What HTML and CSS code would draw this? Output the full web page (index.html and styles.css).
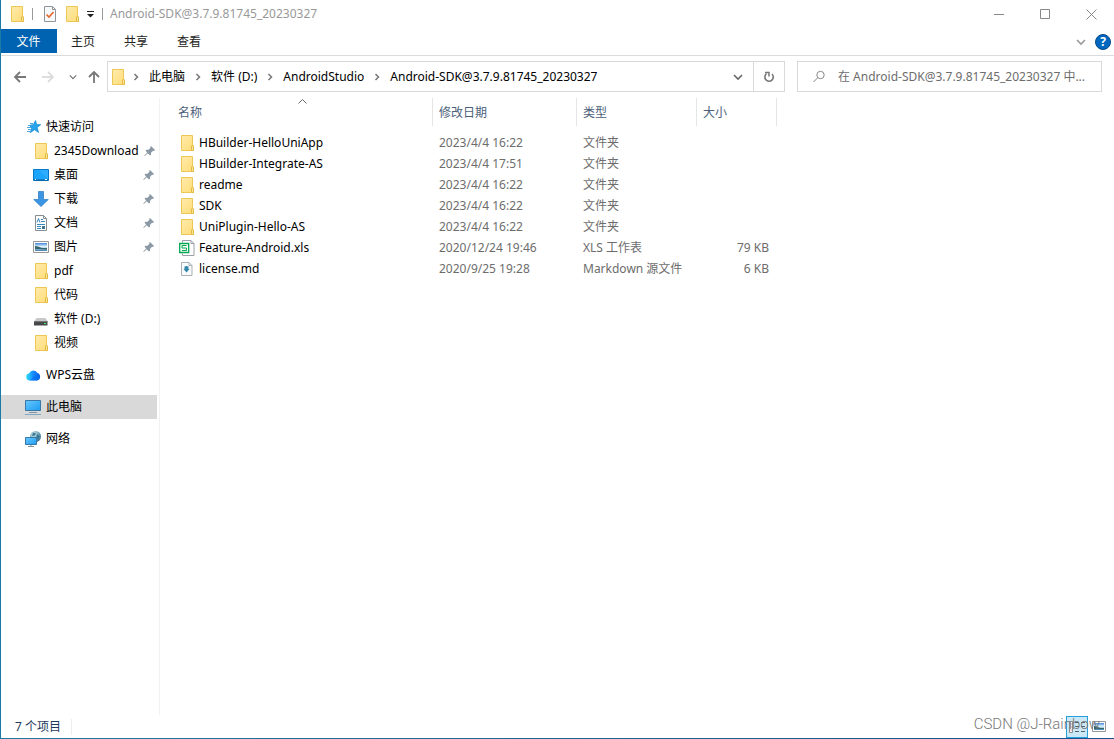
FILE: index.html
```html
<!DOCTYPE html>
<html lang="zh-CN">
<head>
<meta charset="utf-8">
<title>Android-SDK@3.7.9.81745_20230327</title>
<link rel="stylesheet" href="styles.css">
</head>
<body>
<svg class="sprite" aria-hidden="true">
  <defs>
    <linearGradient id="gold" x1="0" y1="0" x2="1" y2="1"><stop offset="0" stop-color="#ffebac"/><stop offset="1" stop-color="#ffdc77"/></linearGradient>
    <linearGradient id="screen" x1="0" y1="0" x2="1" y2="1"><stop offset="0" stop-color="#69c8ff"/><stop offset="1" stop-color="#1c9cf2"/></linearGradient>
    <linearGradient id="cloud" x1="0" y1="0" x2="1" y2="0"><stop offset="0" stop-color="#2fdcf5"/><stop offset=".5" stop-color="#168cff"/><stop offset="1" stop-color="#075bdf"/></linearGradient>
    <linearGradient id="sky" x1="0" y1="0" x2="0" y2="1"><stop offset="0" stop-color="#3f83dc"/><stop offset=".45" stop-color="#e2f5fc"/><stop offset=".6" stop-color="#b8d8e8"/><stop offset="1" stop-color="#3f7cae"/></linearGradient>
    <radialGradient id="globe" cx=".35" cy=".3" r=".8"><stop offset="0" stop-color="#dbf1f5"/><stop offset=".5" stop-color="#7ba9bb"/><stop offset="1" stop-color="#2d6788"/></radialGradient>
  </defs>
  <symbol id="folder" viewBox="0 0 16 16"><path d="M2.500.5h11v10l1 1v4h-12z" fill="url(#gold)" stroke="#edc755"/><path d="M12.500 15.500v-4.500l1-1 1 1v4.500z" fill="#ffe394" stroke="#e4bb45"/></symbol>
  <symbol id="pin" viewBox="0 0 12 12"><path d="M7 1l4 4-1 1-1-.3-2 2v2L6 10.500 3.800 8.200.8 11l-.5-.5L3.200 7.500 1.500 5.500 2.500 4.700h2l2-2L6.200 2z" fill="#8998a4"/></symbol>
  <symbol id="sep" viewBox="0 0 8 8"><path d="M2.500 1l3 3-3 3" fill="none" stroke="#777" stroke-width="1.500"/></symbol>
  <symbol id="down" viewBox="0 0 10 10"><path d="M1 3l4 4 4-4" fill="none" stroke="currentColor" stroke-width="1.600"/></symbol>
  <symbol id="arrow" viewBox="0 0 14 14"><path d="M13 7H2M7 2L2 7l5 5" fill="none" stroke="currentColor" stroke-width="1.800"/></symbol>
  <symbol id="star" viewBox="0 0 16 16"><path d="M10.500 1.500l1.200 4 4 .2-3.500 2.700 1.300 5-4-2.700-4.200 3 1.300-4.500-2-3 3.700-.5z" fill="#27a4ed" stroke="#1487cf" stroke-width=".7"/><path d="M5 4.500h3M3 6.500h3M2 8.500h4M3 10.500h3M2 12.500h3" stroke="#4ca9df"/></symbol>
  <symbol id="desktop" viewBox="0 0 16 16"><path d="M.5 2.500h15v11H.5z" fill="#1ca5ff" stroke="#0878c8"/><path d="M1 13h14" stroke="#075895"/><path d="M2 12.500h1m9 0h2" stroke="#fff"/><path d="M6 3h9v9z" fill="#40b5ff" opacity=".5"/></symbol>
  <symbol id="download" viewBox="0 0 16 16"><path d="M5.500.5h5v8h4.800L8 15.500.7 8.500h4.800z" fill="#3a96e5" stroke="#2879bc" stroke-width=".7"/></symbol>
  <symbol id="doc" viewBox="0 0 16 16"><path d="M2.500.5h8l3 3v12h-11z" fill="#fff" stroke="#858e94"/><path d="M10.500.5v3h3" fill="none" stroke="#858e94"/><path d="M4 7.500l1.500-4 1.500 4M8 4.500h2M8 6.500h4M4 9.500h8M4 11.500h4M4 13.500h4" fill="none" stroke="#3788bc"/><path d="M9 11h3v3H9z" fill="#42758d"/></symbol>
  <symbol id="picture" viewBox="0 0 16 16"><path d="M.5 2.500h15v11H.5z" fill="#fff" stroke="#979797"/><path d="M2 4h12v8H2z" fill="url(#sky)"/><path d="M2 7l3 .5 4 1.500h5v1.500l-6-.5H2z" fill="#386568"/></symbol>
  <symbol id="thumb" viewBox="0 0 14 11"><path d="M.5.5h13v10H.5z" fill="#fff" stroke="#979797"/><path d="M2 2h10v7H2z" fill="url(#sky)"/><path d="M2 5l3 .5 3 1.500h4v1H2z" fill="#386568"/></symbol>
  <symbol id="drive" viewBox="0 0 16 16"><path d="M3.500 7h9l2 3h-13z" fill="#c6c8ca"/><path d="M1 10h13.500v4.500H1z" fill="#45494c"/><path d="M1 10.500h13.500" stroke="#777"/><path d="M11 12h2v1h-2z" fill="#41f35b"/></symbol>
  <symbol id="cloudicon" viewBox="0 0 16 16"><path d="M4.500 13.500a3.700 3.700 0 0 1-.3-7.300A4.600 4.600 0 0 1 12.500 6a3.900 3.900 0 0 1-.5 7.500z" fill="url(#cloud)"/><path d="M4 13.500c3 0 3-5 7-5 2 0 3 .5 4 1.500a3.500 3.500 0 0 1-3 3.500z" fill="#0870ee" opacity=".6"/></symbol>
  <symbol id="pc" viewBox="0 0 16 16"><path d="M.5 1.500h15v10H.5z" fill="url(#screen)" stroke="#3977a6"/><path d="M4 13.500h8" stroke="#8197a7"/><path d="M0 15.500h16" stroke="#81a9c6"/></symbol>
  <symbol id="network" viewBox="0 0 16 16"><circle cx="10.500" cy="5.500" r="5.500" fill="url(#globe)"/><path d="M8 1.500l3 1-1 2-3 .5M12 3l3 2-2 4-2-2z" fill="#3b7895"/><path d="M.5 6.500h11v7H.5z" fill="url(#screen)" stroke="#3977a6"/><path d="M3 15.500h6M6 14v1" stroke="#8197a7"/></symbol>
  <symbol id="xls" viewBox="0 0 16 16"><path d="M3.500 2.500v-2h8.500l3 3v12H3.500v-2" fill="#fff" stroke="#9b9fa9"/><path d="M12 .5v3h3" fill="none" stroke="#9b9fa9"/><path d="M.7 3.500h9v9h-9z" fill="#fff" stroke="#00a94f" stroke-width="1.300"/><path d="M7.500 5.500H3v2.500h4.500v2.500H3" fill="none" stroke="#00a94f"/></symbol>
  <symbol id="md" viewBox="0 0 16 16"><path d="M2.500 1.500h7.500l3 3v10H2.500z" fill="#f8fafb" stroke="#aab1b7"/><path d="M10 1.500v3h3" fill="none" stroke="#aab1b7"/><path d="M5.500 5.500h1V5h2v.5h1V8h1L7.500 11.500 4.500 8h1z" fill="#3387aa"/></symbol>
  <symbol id="check" viewBox="0 0 16 16"><path d="M2.500.5h8l3 3v12h-11z" fill="#f7f9fb" stroke="#8f959b"/><path d="M10.500.5v3h3" fill="none" stroke="#8f959b"/><path d="M4.500 8.500l2.500 2.500 4.500-5" fill="none" stroke="#e8652a" stroke-width="1.600"/></symbol>
</svg>

<div class="window">
  <header class="titlebar">
    <div class="quick">
      <svg class="icon"><use href="#folder"/></svg>
      <span class="bar"></span>
      <button class="plain" aria-label="属性"><svg class="icon"><use href="#check"/></svg></button>
      <button class="plain" aria-label="新建文件夹"><svg class="icon"><use href="#folder"/></svg></button>
      <button class="plain more" aria-label="自定义快速访问工具栏"><svg width="8" height="8" viewBox="0 0 8 8"><path d="M0 1.500h7" stroke="#222"/><path d="M0 4h7L3.500 7.500z" fill="#222"/></svg></button>
      <span class="bar"></span>
    </div>
    <h1 class="title">Android-SDK@3.7.9.81745_20230327</h1>
    <div class="caption">
      <button class="plain" aria-label="最小化"><svg width="11" height="11" viewBox="0 0 11 11"><path d="M0 5.500h10" stroke="#888"/></svg></button>
      <button class="plain" aria-label="最大化"><svg width="11" height="11" viewBox="0 0 11 11"><path d="M.5.5h9v9h-9z" fill="none" stroke="#888"/></svg></button>
      <button class="plain" aria-label="关闭"><svg width="11" height="11" viewBox="0 0 11 11"><path d="M.5.5l10 10M10.500.5l-10 10" stroke="#888"/></svg></button>
    </div>
  </header>

  <nav class="ribbon">
    <button class="tab file">文件</button>
    <button class="tab">主页</button>
    <button class="tab">共享</button>
    <button class="tab">查看</button>
    <div class="ribbon-end">
      <button class="plain gray" aria-label="展开功能区"><svg width="10" height="10"><use href="#down"/></svg></button>
      <button class="help" aria-label="帮助">?</button>
    </div>
  </nav>

  <div class="navrow">
    <div class="history">
      <button class="plain" aria-label="后退"><svg width="14" height="14"><use href="#arrow"/></svg></button>
      <button class="plain off" aria-label="前进"><svg class="flip" width="14" height="14"><use href="#arrow"/></svg></button>
      <button class="plain" aria-label="最近浏览的位置"><svg width="8" height="8"><use href="#down"/></svg></button>
      <button class="plain" aria-label="上移"><svg class="turn" width="14" height="14"><use href="#arrow"/></svg></button>
    </div>
    <div class="address">
      <svg class="icon"><use href="#folder"/></svg>
      <svg class="sep"><use href="#sep"/></svg>
      <button class="plain">此电脑</button>
      <svg class="sep"><use href="#sep"/></svg>
      <button class="plain">软件 (D:)</button>
      <svg class="sep"><use href="#sep"/></svg>
      <button class="plain">AndroidStudio</button>
      <svg class="sep"><use href="#sep"/></svg>
      <button class="plain">Android-SDK@3.7.9.81745_20230327</button>
      <div class="address-end">
        <button class="plain" aria-label="以前的位置"><svg width="10" height="10"><use href="#down"/></svg></button>
        <button class="plain refresh" aria-label="刷新"><svg width="12" height="12" viewBox="0 0 12 12"><path d="M9 3a4.200 4.200 0 1 1-5.500-.3" fill="none" stroke="#777" stroke-width="1.600"/><path d="M2 1.500h4v4" fill="none" stroke="#777" stroke-width="1.500"/></svg></button>
      </div>
    </div>
    <label class="search">
      <svg width="14" height="14" viewBox="0 0 14 14"><circle cx="8.500" cy="5" r="3.700" fill="none" stroke="#888"/><path d="M5.700 7.700L1.500 12" stroke="#888"/></svg>
      <input type="text" aria-label="搜索" placeholder="在 Android-SDK@3.7.9.81745_20230327 中...">
    </label>
  </div>

  <div class="main">
    <nav class="sidebar">
      <ul>
        <li><a href="#"><svg class="icon"><use href="#star"/></svg>快速访问</a></li>
        <li class="sub"><a href="#"><svg class="icon"><use href="#folder"/></svg>2345Download<svg class="pin"><use href="#pin"/></svg></a></li>
        <li class="sub"><a href="#"><svg class="icon"><use href="#desktop"/></svg>桌面<svg class="pin"><use href="#pin"/></svg></a></li>
        <li class="sub"><a href="#"><svg class="icon"><use href="#download"/></svg>下载<svg class="pin"><use href="#pin"/></svg></a></li>
        <li class="sub"><a href="#"><svg class="icon"><use href="#doc"/></svg>文档<svg class="pin"><use href="#pin"/></svg></a></li>
        <li class="sub"><a href="#"><svg class="icon"><use href="#picture"/></svg>图片<svg class="pin"><use href="#pin"/></svg></a></li>
        <li class="sub"><a href="#"><svg class="icon"><use href="#folder"/></svg>pdf</a></li>
        <li class="sub"><a href="#"><svg class="icon"><use href="#folder"/></svg>代码</a></li>
        <li class="sub"><a href="#"><svg class="icon"><use href="#drive"/></svg>软件 (D:)</a></li>
        <li class="sub"><a href="#"><svg class="icon"><use href="#folder"/></svg>视频</a></li>
      </ul>
      <ul><li><a href="#"><svg class="icon"><use href="#cloudicon"/></svg>WPS云盘</a></li></ul>
      <ul><li class="selected"><a href="#"><svg class="icon"><use href="#pc"/></svg>此电脑</a></li></ul>
      <ul><li><a href="#"><svg class="icon"><use href="#network"/></svg>网络</a></li></ul>
    </nav>

    <main class="content">
      <table class="files">
        <colgroup><col class="c-name"><col class="c-date"><col class="c-type"><col class="c-size"></colgroup>
        <thead>
          <tr>
            <th class="sorted" aria-sort="ascending">名称<svg class="sort" width="9" height="5" viewBox="0 0 9 5"><path d="M.5 4.500l4-4 4 4" fill="none" stroke="#666"/></svg></th>
            <th>修改日期</th><th>类型</th><th>大小</th>
          </tr>
        </thead>
        <tbody>
          <tr><td><a href="#"><svg class="icon"><use href="#folder"/></svg>HBuilder-HelloUniApp</a></td><td>2023/4/4 16:22</td><td>文件夹</td><td></td></tr>
          <tr><td><a href="#"><svg class="icon"><use href="#folder"/></svg>HBuilder-Integrate-AS</a></td><td>2023/4/4 17:51</td><td>文件夹</td><td></td></tr>
          <tr><td><a href="#"><svg class="icon"><use href="#folder"/></svg>readme</a></td><td>2023/4/4 16:22</td><td>文件夹</td><td></td></tr>
          <tr><td><a href="#"><svg class="icon"><use href="#folder"/></svg>SDK</a></td><td>2023/4/4 16:22</td><td>文件夹</td><td></td></tr>
          <tr><td><a href="#"><svg class="icon"><use href="#folder"/></svg>UniPlugin-Hello-AS</a></td><td>2023/4/4 16:22</td><td>文件夹</td><td></td></tr>
          <tr><td><a href="#"><svg class="icon"><use href="#xls"/></svg>Feature-Android.xls</a></td><td>2020/12/24 19:46</td><td>XLS 工作表</td><td>79 KB</td></tr>
          <tr><td><a href="#"><svg class="icon"><use href="#md"/></svg>license.md</a></td><td>2020/9/25 19:28</td><td>Markdown 源文件</td><td>6 KB</td></tr>
        </tbody>
      </table>
    </main>
  </div>

  <footer class="status">
    <span class="count">7 个项目</span>
    <div class="views">
      <button class="view active" aria-label="详细信息"><svg width="16" height="14" viewBox="0 0 16 14"><path d="M.5 1.500h3v11h-3z" fill="#fff" stroke="#8b8b8b"/><path d="M2 3.500v1m0 2v1m0 2v1" stroke="#d04a3a"/><path d="M6 2.500h4m2 0h4M6 6.500h4m2 0h4M6 11.500h4m2 0h4" stroke="#57616b"/></svg></button>
      <button class="view" aria-label="大图标"><svg width="14" height="11"><use href="#thumb"/></svg></button>
    </div>
    <span class="watermark">CSDN @J-Rainbow</span>
  </footer>
</div>
</body>
</html>
```

FILE: styles.css
```css
* { box-sizing: border-box; }
body {
  margin: 0;
  background: #fff;
  color: #000;
  font: 12px/16px "Noto Sans", "Noto Sans CJK SC", sans-serif;
}
button, input { font: inherit; color: inherit; }
a { color: inherit; text-decoration: none; }
ul { margin: 0; padding: 0; list-style: none; }
svg { display: block; flex: none; }
.sprite { position: absolute; width: 0; height: 0; }
.icon { width: 16px; height: 16px; }
.plain {
  display: flex;
  align-items: center;
  justify-content: center;
  padding: 0;
  border: 0;
  background: none;
  white-space: nowrap;
}

.window {
  display: flex;
  flex-direction: column;
  min-height: 100vh;
  padding-bottom: 1px;
  border-left: 1px solid #1c7ba5;
  background: linear-gradient(to right, #1c7ba5, #1f4f8f) bottom / 100% 1px no-repeat;
}

/* Title bar */
.titlebar { display: flex; align-items: center; height: 28px; padding: 0 0 0 8px; }
.quick { display: flex; align-items: center; gap: 6px; }
.bar { width: 1px; height: 12px; margin: 0 2px 0 0; background: #999; }
.quick > .icon + .bar { margin: 0 3px 0 1px; }
.more { width: 10px; }
.title { margin: 0 0 0 5px; color: #999; font-size: 12px; font-weight: 400; }
.caption { display: flex; margin-left: auto; }
.caption .plain { width: 46px; height: 27px; }

/* Ribbon */
.ribbon {
  display: flex;
  align-items: center;
  height: 28px;
  padding-bottom: 2px;
  border-bottom: 1px solid #dadbdc;
}
.tab { width: 53px; height: 24px; padding: 2px 1px 0 0; border: 0; background: none; color: #222; }
.tab.file { width: 56px; background: #0063b1; color: #fff; }
.ribbon-end { display: flex; align-items: center; gap: 9px; margin-left: auto; padding: 2px 3px 0 0; }
.gray { color: #999; }
.help {
  width: 16px;
  height: 16px;
  padding: 0;
  border: 1px solid #064a87;
  border-radius: 50%;
  background: #0067c0;
  color: #fff;
  font-weight: 700;
  line-height: 14px;
}

/* Navigation row */
.navrow { display: flex; padding: 5px 12px 0; }
.history { display: flex; align-items: center; gap: 14px; width: 94px; color: #777; }
.history .plain:nth-child(4) { margin-left: -4px; }
.history .off { color: #ddd; }
.flip { transform: rotate(180deg); }
.turn { transform: rotate(90deg); }
.address {
  display: flex;
  flex: 1;
  align-items: center;
  gap: 9px;
  height: 31px;
  padding: 0 0 0 2px;
  border: 1px solid #d9d9d9;
}
.sep { width: 8px; height: 8px; }
.address .icon + .sep { margin-left: -3px; }
.address-end { display: flex; align-self: stretch; margin-left: auto; color: #666; }
.address-end .plain { width: 31px; }
.address-end .refresh { border-left: 1px solid #d9d9d9; }
.search {
  display: flex;
  align-items: center;
  gap: 12px;
  width: 305px;
  height: 31px;
  margin-left: 12px;
  padding: 0 6px 0 14px;
  border: 1px solid #d9d9d9;
}
.search input { flex: 1; min-width: 0; padding: 0; border: 0; outline: 0; background: none; }
.search input::placeholder { color: #6d6d6d; opacity: 1; }

/* Body */
.main { display: flex; flex: 1; padding-top: 6px; }
.sidebar { width: 159px; padding: 17px 2px 0 0; border-right: 1px solid #f2f2f2; }
.sidebar ul + ul { margin-top: 8px; }
.sidebar a { display: flex; align-items: center; gap: 5px; height: 24px; padding: 0 2px 0 24px; }
.sidebar .sub a { padding-left: 32px; }
.selected { background: #d9d9d9; }
.pin { width: 12px; height: 12px; margin-left: auto; }
.content { flex: 1; padding-left: 12px; }
.files { width: 605px; border-collapse: separate; border-spacing: 0; table-layout: fixed; }
.c-name { width: 261px; }
.c-date { width: 144px; }
.c-type { width: 120px; }
.c-size { width: 80px; }
.files th {
  position: relative;
  height: 28px;
  padding: 2px 6px 0;
  border-right: 1px solid #e5e5e5;
  color: #4c607a;
  font-weight: 400;
  text-align: left;
}
.sort { position: absolute; top: 1px; left: calc(50% - 4px); }
.files tbody::before { content: ""; display: block; height: 6px; }
.files td { height: 21px; padding: 0 6px; color: #6d6d6d; white-space: nowrap; }
.files td:first-child { padding-left: 7px; }
.files td:last-child { padding-right: 8px; text-align: right; }
.files td a { display: flex; align-items: center; gap: 4px; color: #000; }

/* Status bar */
.status { position: relative; display: flex; align-items: center; height: 23px; padding-left: 14px; color: #1e395b; }
.count { padding-right: 10px; border-right: 1px solid #eee; }
.views { display: flex; margin-left: auto; padding-right: 4px; }
.view {
  display: flex;
  align-items: center;
  justify-content: center;
  width: 22px;
  height: 22px;
  padding: 0;
  border: 0;
  background: none;
}
.view.active { border: 1px solid #26a0da; background: #cbe8f6; }
.watermark {
  position: absolute;
  right: 14px;
  bottom: 6px;
  color: #777;
  font: 300 15px/16px Roboto, "Liberation Sans", sans-serif;
}
```
